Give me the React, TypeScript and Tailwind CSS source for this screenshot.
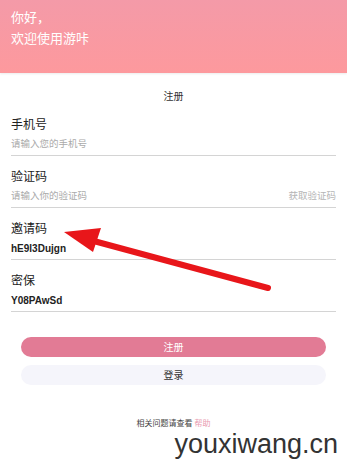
export default function App() {
  const fields = [
    { label: "手机号", value: "请输入您的手机号", placeholder: true },
    { label: "验证码", value: "请输入你的验证码", placeholder: true, extra: "获取验证码" },
    { label: "邀请码", value: "hE9l3Dujgn", placeholder: false },
    { label: "密保", value: "Y08PAwSd", placeholder: false },
  ];

  return (
    <div
      className="relative h-[463px] w-[347px] overflow-hidden bg-white"
      style={{ fontFamily: '"Noto Sans", "Noto Sans CJK SC", sans-serif' }}
    >
      <div className="h-[73px] bg-gradient-to-b from-[#f49aa8] to-[#fd999d] px-[11px] pt-[7px] text-[13px] leading-[21px] text-white shadow-[0_1px_2px_rgba(0,0,0,0.08)]">
        <div>你好，</div>
        <div>欢迎使用游咔</div>
      </div>

      <div className="mt-[15px] h-4 text-center text-[10px] leading-4 text-[#333]">注册</div>

      <div className="px-[11px]">
        {fields.map((f) => (
          <div key={f.label} className="border-b border-[#d4d4d4] pt-[13px] pb-[2px]">
            <div className="h-4 text-[12px] leading-4 text-[#222]">{f.label}</div>
            <div className="mt-[2px] flex h-[18px] items-center justify-between">
              <span
                className={
                  f.placeholder
                    ? "text-[9.5px] text-[#aaa]"
                    : "text-[10px] font-bold text-[#222]"
                }
                style={f.placeholder ? undefined : { fontFamily: '"Liberation Sans", sans-serif' }}
              >
                {f.value}
              </span>
              {f.extra && <span className="text-[9.5px] text-[#b5b5b5]">{f.extra}</span>}
            </div>
          </div>
        ))}
      </div>

      <div className="mt-[25px] flex flex-col gap-[8px] px-[21px]">
        <button className="h-[20px] rounded-full bg-[#e27b95] text-[10px] text-white">注册</button>
        <button className="h-[20px] rounded-full bg-[#f5f5fb] text-[10px] text-[#333]">登录</button>
      </div>

      <div className="mt-[30px] text-center text-[8px] leading-4 text-[#444]">
        相关问题请查看 <span className="text-[#e99ab0]">帮助</span>
      </div>

      <div
        className="absolute right-[9px] top-[429px] text-[27px] leading-[30px] text-[#333]"
        style={{ fontFamily: '"Liberation Sans", sans-serif' }}
      >
        youxiwang.cn
      </div>

      <svg className="pointer-events-none absolute left-0 top-0" width="347" height="463">
        <line x1="268" y1="288" x2="90" y2="240" stroke="#e8161a" strokeWidth="6" strokeLinecap="round" />
        <polygon points="64,232 101,228 93,252" fill="#e8161a" />
      </svg>
    </div>
  );
}
